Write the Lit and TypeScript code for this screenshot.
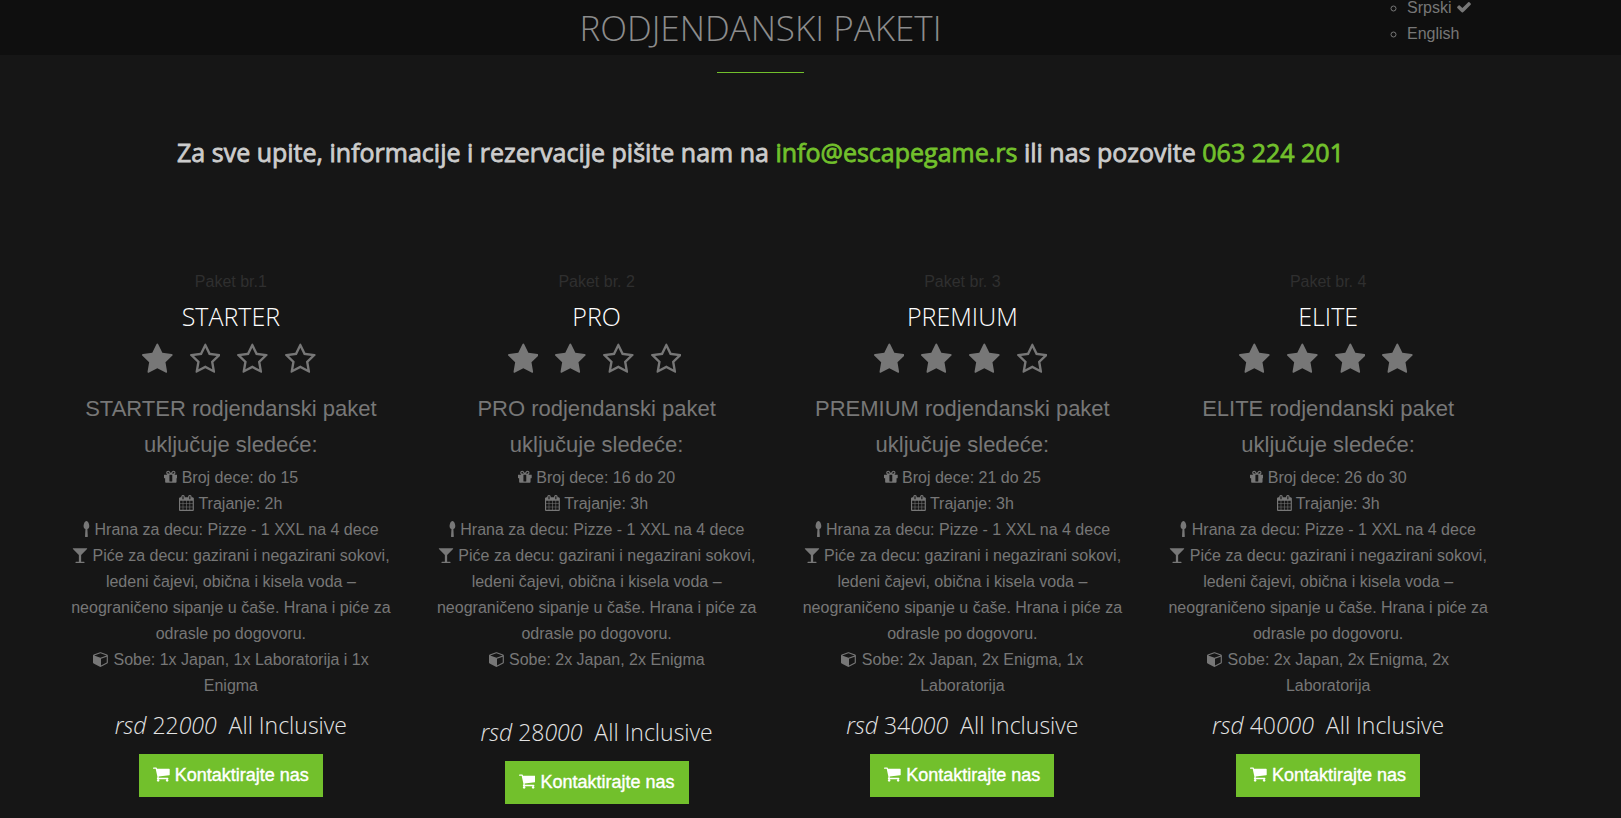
import { LitElement, html, css, svg } from "lit";
import { customElement, property } from "lit/decorators.js";
import { classMap } from "lit/directives/class-map.js";

type Glyph = { box: string; w: number; d: string };

const GLYPHS: Record<string, Glyph> = {
  star: { box: "64 0 1664 1792", w: 1664, d: "M1728 647q0 22-26 48l-363 354 86 500q1 7 1 20 0 21-10.5 35.5t-30.5 14.5q-19 0-40-12l-449-236-449 236q-22 12-40 12-21 0-31.5-14.5t-10.5-35.5q0-6 2-20l86-500-364-354q-25-27-25-48 0-37 56-46l502-73 225-455q19-41 49-41t49 41l225 455 502 73q56 9 56 46z" },
  starOutline: { box: "64 0 1664 1792", w: 1664, d: "M1201 1004l306-297-422-62-189-382-189 382-422 62 306 297-73 421 378-199 377 199zm527-357q0 22-26 48l-363 354 86 500q1 7 1 20 0 50-41 50-19 0-40-12l-449-236-449 236q-22 12-40 12-21 0-31.5-14.5t-10.5-35.5q0-6 2-20l86-500-364-354q-25-27-25-48 0-37 56-46l502-73 225-455q19-41 49-41t49 41l225 455 502 73q56 9 56 46z" },
  cart: { box: "64 0 1664 1792", w: 1664, d: "M704 1536q0 52-38 90t-90 38-90-38-38-90 38-90 90-38 90 38 38 90zm896 0q0 52-38 90t-90 38-90-38-38-90 38-90 90-38 90 38 38 90zm128-1088v512q0 24-16.5 42.5t-40.5 21.5l-1044 122q13 60 13 70 0 16-24 64h920q26 0 45 19t19 45-19 45-45 19h-1024q-26 0-45-19t-19-45q0-11 8-31.5t16-36 21.5-40 15.5-29.5l-177-823h-204q-26 0-45-19t-19-45 19-45 45-19h256q16 0 28.5 6.5t19.5 15.5 13 24.5 8 26 5.5 29.5 4.5 26h1201q26 0 45 19t19 45z" },
  check: { box: "0 0 1792 1792", w: 1792, d: "M1671 566q0 40-28 68l-724 724-136 136q-28 28-68 28t-68-28l-136-136-362-362q-28-28-28-68t28-68l136-136q28-28 68-28t68 28l294 295 656-657q28-28 68-28t68 28l136 136q28 28 28 68z" },
  gift: { box: "128 0 1536 1792", w: 1536, d: "M1056 1356v-716h-320v716q0 25 18 38.5t46 13.5h192q28 0 46-13.5t18-38.5zm-456-844h195l-126-161q-26-31-69-31-40 0-68 28t-28 68 28 68 68 28zm688-96q0-40-28-68t-68-28q-43 0-69 31l-125 161h194q40 0 68-28t28-68zm376 256v320q0 14-9 23t-23 9h-96v416q0 40-28 68t-68 28h-1088q-40 0-68-28t-28-68v-416h-96q-14 0-23-9t-9-23v-320q0-14 9-23t23-9h440q-93 0-158.5-65.5t-65.5-158.5 65.5-158.5 158.5-65.5q107 0 168 77l128 165 128-165q61-77 168-77 93 0 158.5 65.5t65.5 158.5-65.5 158.5-158.5 65.5h440q14 0 23 9t9 23z" },
  calendar: { box: "64 0 1664 1792", w: 1664, d: "M192 1664h288v-288h-288v288zm352 0h320v-288h-320v288zm-352-352h288v-320h-288v320zm352 0h320v-320h-320v320zm-352-384h288v-288h-288v288zm736 736h320v-288h-320v288zm-384-736h320v-288h-320v288zm768 736h288v-288h-288v288zm-384-352h320v-320h-320v320zm-352-864v-288q0-13-9.5-22.5t-22.500-9.500h-64q-13 0-22.500 9.500t-9.500 22.500v288q0 13 9.500 22.500t22.500 9.500h64q13 0 22.500-9.500t9.500-22.500zm736 864h288v-320h-288v320zm-384-384h320v-288h-320v288zm384 0h288v-288h-288v288zm32-480v-288q0-13-9.500-22.500t-22.500-9.500h-64q-13 0-22.500 9.500t-9.500 22.500v288q0 13 9.500 22.500t22.500 9.500h64q13 0 22.500-9.500t9.500-22.500zm384-64v1280q0 52-38 90t-90 38h-1408q-52 0-90-38t-38-90v-1280q0-52 38-90t90-38h128v-96q0-66 47-113t113-47h64q66 0 113 47t47 113v96h384v-96q0-66 47-113t113-47h64q66 0 113 47t47 113v96h128q52 0 90 38t38 90z" },
  spoon: { box: "384 -50 768 1792", w: 768, d: "M1088 500q0 145-57 233.500T879 854l45 830q2 26-16 45t-44 19h-192q-26 0-44-19t-16-45l45-830q-95-32-152-120.500T448 500q0-120 46.500-249.500t121-215T768-50t152.500 85.500 121 215T1088 500z" },
  glass: { box: "0 0 1792 1792", w: 1792, d: "M1699 186q0 35-43 78l-632 632v768h320q26 0 45 19t19 45-19 45-45 19h-896q-26 0-45-19t-19-45 19-45 45-19h320v-768l-632-632q-43-43-43-78 0-23 18-36.500t38-17.500 43-4h1408q23 0 43 4t38 17.500 18 36.500z" },
  cube: { box: "0 0 1792 1792", w: 1792, d: "M896 1629l640-349v-636l-640 233v752zm-64-865l698-254-698-254-698 254zm832-252v768q0 35-18 65t-49 47l-704 384q-28 16-61 16t-61-16l-704-384q-31-17-49-47t-18-65v-768q0-40 23-73t61-47l704-256q22-8 44-8t44 8l704 256q38 14 61 47t23 73z" },
};

const icon = (name: string, size = 16) => {
  const g = GLYPHS[name];
  return html`<svg class="icon" aria-hidden="true" viewBox=${g.box} width=${(size * g.w) / 1792} height=${size}>
    ${svg`<path d=${g.d}></path>`}
  </svg>`;
};

interface Package {
  label: string;
  name: string;
  stars: number;
  kids: string;
  hours: string;
  rooms: string;
  price: string;
  short?: boolean;
}

const PACKAGES: Package[] = [
  { label: "Paket br.1", name: "STARTER", stars: 1, kids: "do 15", hours: "2h", rooms: "1x Japan, 1x Laboratorija i 1x Enigma", price: "22" },
  { label: "Paket br. 2", name: "PRO", stars: 2, kids: "16 do 20", hours: "3h", rooms: "2x Japan, 2x Enigma", price: "28", short: true },
  { label: "Paket br. 3", name: "PREMIUM", stars: 3, kids: "21 do 25", hours: "3h", rooms: "2x Japan, 2x Enigma, 1x Laboratorija", price: "34" },
  { label: "Paket br. 4", name: "ELITE", stars: 4, kids: "26 do 30", hours: "3h", rooms: "2x Japan, 2x Enigma, 2x Laboratorija", price: "40" },
];

@customElement("package-card")
export class PackageCard extends LitElement {
  @property({ attribute: false }) pack!: Package;

  static styles = css`
    :host {
      display: flex;
      flex-direction: column;
      align-items: center;
      padding: 0 20px;
      text-align: center;
      line-height: 26px;
    }
    h3, p, ul { margin: 0; padding: 0; font-weight: 400; }
    .icon { fill: currentColor; vertical-align: -2px; }
    .label { color: #2f2f2f; }
    .name {
      margin-top: 5px;
      font: 300 25px/32px "Open Sans", sans-serif;
      color: #fff;
    }
    .stars { display: flex; gap: 17px; padding: 11px 4px 0 0; height: 33px; }
    .intro { margin-top: 15px; font-size: 22px; line-height: 36px; }
    .features { margin-top: 2px; list-style: none; }
    .features.short { padding-bottom: 33px; }
    .price {
      margin-top: 10px;
      font: 300 23px/32px "Open Sans", sans-serif;
      color: #e4e4e4;
      white-space: pre;
    }
    .button {
      margin-top: 13px;
      padding: 0 14px;
      border: 0;
      background: #72c02c;
      color: #fff;
      font: 18px/43px "Liberation Sans", Arial, sans-serif;
      -webkit-text-stroke: 0.4px #fff;
      cursor: pointer;
    }
  `;

  render() {
    const p = this.pack;
    return html`
      <p class="label">${p.label}</p>
      <h3 class="name">${p.name}</h3>
      <div class="stars" role="img" aria-label="${p.stars} / 4">
        ${[1, 2, 3, 4].map((n) => icon(n <= p.stars ? "star" : "starOutline", 33))}
      </div>
      <p class="intro">${`${p.name} rodjendanski paket uključuje sledeće:`}</p>
      <ul class=${classMap({ features: true, short: !!p.short })}>
        <li>${icon("gift")} Broj dece: ${p.kids}</li>
        <li>${icon("calendar")} Trajanje: ${p.hours}</li>
        <li>${icon("spoon")} Hrana za decu: Pizze - 1 XXL na 4 dece</li>
        <li>${icon("glass")} Piće za decu: gazirani i negazirani sokovi, ledeni čajevi, obična i kisela voda – neograničeno sipanje u čaše. Hrana i piće za odrasle po dogovoru.</li>
        <li>${icon("cube")} Sobe: ${p.rooms}</li>
      </ul>
      <p class="price"><i>rsd</i> ${p.price}<i>000</i>  All Inclusive</p>
      <button class="button" type="button">${icon("cart", 18)} Kontaktirajte nas</button>
    `;
  }
}

@customElement("app-root")
export class AppRoot extends LitElement {
  static styles = css`
    :host {
      display: block;
      min-height: 100vh;
      overflow: hidden;
      background: #161616;
      color: #777;
      font: 16px/26px "Liberation Sans", Arial, sans-serif;
    }
    .icon { fill: currentColor; vertical-align: -2px; }
    a { color: inherit; text-decoration: none; }
    .bar {
      display: grid;
      grid-template: 55px / 1fr auto 1fr;
      padding-right: 100px;
      background: #0f0f0f;
    }
    .title {
      grid-column: 2;
      margin: 0;
      font: 300 35px/55px "Open Sans", sans-serif;
      color: #8c8c8c;
    }
    .languages {
      justify-self: end;
      align-self: end;
      box-sizing: border-box;
      width: 114px;
      margin: 0;
      padding: 0 0 8px;
      list-style: circle;
    }
    .main { padding-right: 100px; }
    .rule { width: 87px; height: 1px; margin: 17px auto 0; border: 0; background: #72c02c; }
    .contact {
      margin: 59px 0 0;
      text-align: center;
      font: 400 25px/40px "Open Sans", sans-serif;
      -webkit-text-stroke: 0.8px currentColor;
      color: #ccc;
    }
    .contact a { color: #72c02c; }
    .packages {
      display: grid;
      grid-template-columns: repeat(4, 1fr);
      padding: 97px 10px 0 48px;
    }
  `;

  render() {
    return html`
      <header class="bar">
        <h1 class="title">RODJENDANSKI PAKETI</h1>
        <ul class="languages">
          <li><a href="#sr">Srpski ${icon("check")}</a></li>
          <li><a href="#en">English</a></li>
        </ul>
      </header>
      <main class="main">
        <hr class="rule" />
        <h2 class="contact">
          Za sve upite, informacije i rezervacije pišite nam na
          <a href="mailto:info@escapegame.rs">info@escapegame.rs</a> ili nas pozovite
          <a href="tel:063224201">063 224 201</a>
        </h2>
        <section class="packages">
          ${PACKAGES.map((p) => html`<package-card .pack=${p}></package-card>`)}
        </section>
      </main>
    `;
  }
}
